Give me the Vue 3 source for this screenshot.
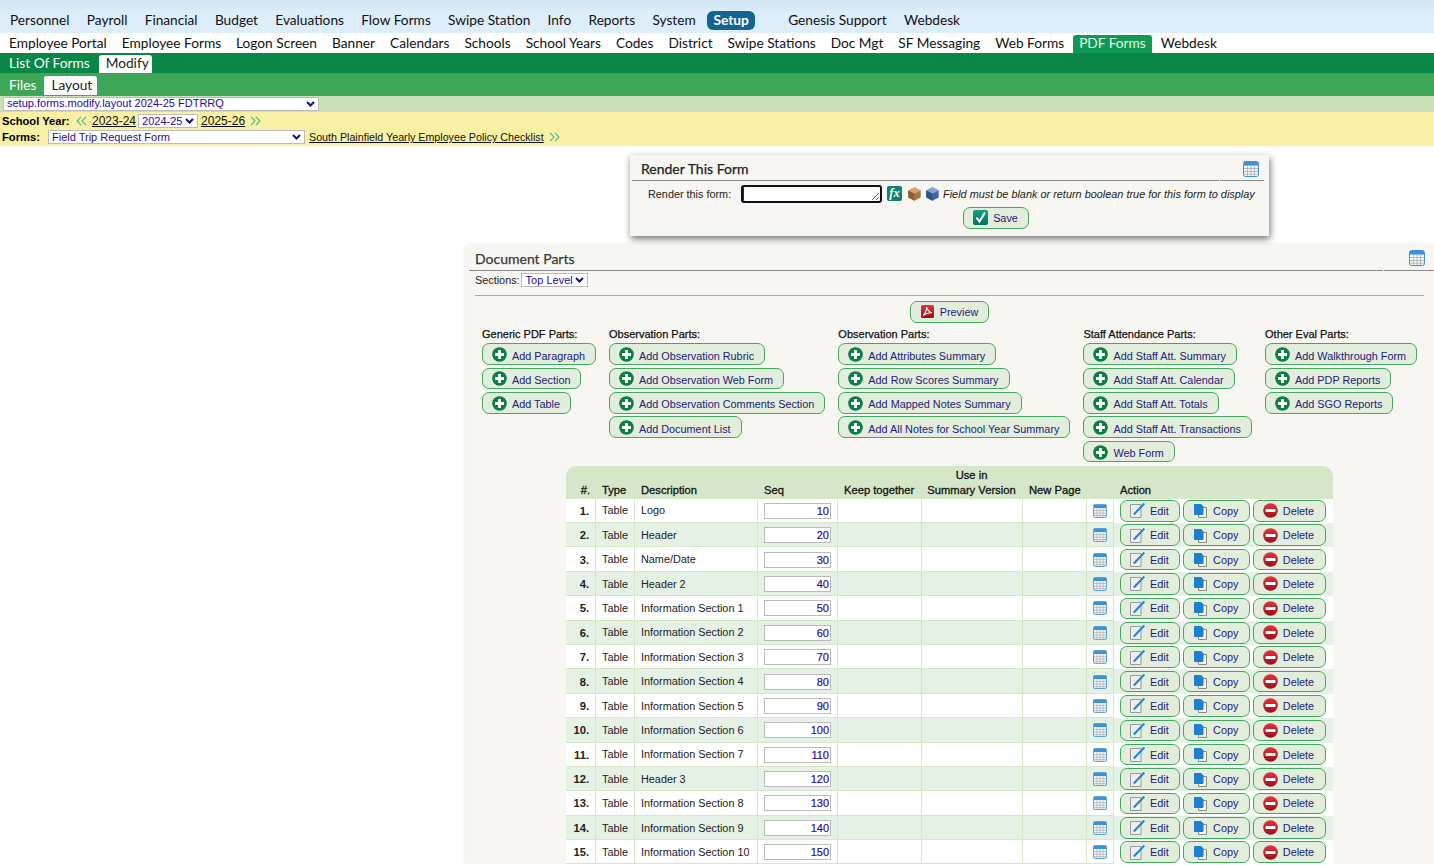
<script setup>
const nav1 = ['Personnel','Payroll','Financial','Budget','Evaluations','Flow Forms','Swipe Station','Info','Reports','System']
const nav2 = ['Employee Portal','Employee Forms','Logon Screen','Banner','Calendars','Schools','School Years','Codes','District','Swipe Stations','Doc Mgt','SF Messaging','Web Forms']
const partCols = [
  { title: 'Generic PDF Parts:', items: ['Add Paragraph','Add Section','Add Table'] },
  { title: 'Observation Parts:', items: ['Add Observation Rubric','Add Observation Web Form','Add Observation Comments Section','Add Document List'] },
  { title: 'Observation Parts:', items: ['Add Attributes Summary','Add Row Scores Summary','Add Mapped Notes Summary','Add All Notes for School Year Summary'] },
  { title: 'Staff Attendance Parts:', items: ['Add Staff Att. Summary','Add Staff Att. Calendar','Add Staff Att. Totals','Add Staff Att. Transactions','Web Form'] },
  { title: 'Other Eval Parts:', items: ['Add Walkthrough Form','Add PDP Reports','Add SGO Reports'] },
]
const names = ['Logo','Header','Name/Date','Header 2','Information Section 1','Information Section 2','Information Section 3','Information Section 4','Information Section 5','Information Section 6','Information Section 7','Header 3','Information Section 8','Information Section 9','Information Section 10']
const rows = names.map((d, i) => ({ n: i + 1, d, seq: (i + 1) * 10 }))
</script>

<template>
  <svg class="sprite" aria-hidden="true">
    <defs>
      <linearGradient id="g-red" x1="0" y1="0" x2="0" y2="1"><stop offset="0" stop-color="#e8333a"/><stop offset="1" stop-color="#98101a"/></linearGradient>
      <linearGradient id="g-teal" x1="0" y1="0" x2="0" y2="1"><stop offset="0" stop-color="#16a08c"/><stop offset="1" stop-color="#04705f"/></linearGradient>
      <symbol id="i-plus" viewBox="0 0 15 15"><circle cx="7.5" cy="7.5" r="7.3" fill="#0b7d45"/><path d="M7.5 3v9M3 7.5h9" stroke="#fff" stroke-width="2.8"/></symbol>
      <symbol id="i-cal" viewBox="0 0 16 16"><rect x=".5" y=".5" width="15" height="15" rx="2" fill="#f4f6f8" stroke="#3d92d6"/><rect x="1" y="1" width="14" height="3.6" fill="#3d92d6"/><path d="M1 7.5h14M1 10.5h14M1 13.2h14M4.5 5v10M8 5v10M11.5 5v10" stroke="#a9aeb3" stroke-width=".8"/></symbol>
      <symbol id="i-edit" viewBox="0 0 15 15"><path d="M.5 1.5h10.5v13H.5z" fill="#eee" stroke="#999"/><path d="M3.8 11.5 14.3.5" stroke="#1d84d6" stroke-width="2"/></symbol>
      <symbol id="i-copy" viewBox="0 0 15 15"><path d="M5.5 4.5h8v10h-8z" fill="#f7f7f7" stroke="#8a8a8a"/><path d="M1 2q0-1 1-1h6l2.5 2.5v7.5q0 1-1 1H2q-1 0-1-1z" fill="#1d7fd0"/></symbol>
      <symbol id="i-del" viewBox="0 0 15 15"><circle cx="7.5" cy="7.5" r="7.3" fill="url(#g-red)"/><rect x="2.6" y="6" width="9.8" height="3" fill="#fff"/></symbol>
      <symbol id="i-pdf" viewBox="0 0 13 13"><rect width="13" height="13" rx="1.5" fill="url(#g-red)"/><path d="M2 10.5C4 9 6 5 5.6 2.2c1 3 2.6 5 5.4 5.6-3-.3-6 .4-9 2.7z" fill="none" stroke="#fff" stroke-width="1.1"/></symbol>
      <symbol id="i-check" viewBox="0 0 15 15"><rect width="15" height="15" rx="2" fill="url(#g-teal)"/><path d="M3.5 7.5 6.5 11.5 12 2.5" fill="none" stroke="#fff" stroke-width="2"/></symbol>
      <symbol id="i-box" viewBox="0 0 13 14"><path d="M6.5.3 12.7 3.5v7L6.5 13.7.3 10.5v-7z" fill="#a9764a"/><path d="M6.5.3 12.7 3.5 6.5 6.7.3 3.5z" fill="#d0a479"/><path d="M6.5 6.7v7L.3 10.5v-7z" fill="#8d5f36"/></symbol>
      <symbol id="i-cube" viewBox="0 0 13 14"><path d="M6.5.3 12.7 3.5v7L6.5 13.7.3 10.5v-7z" fill="#3f67a3"/><path d="M6.5.3 12.7 3.5 6.5 6.7.3 3.5z" fill="#84a6d4"/><path d="M6.5 6.7v7L.3 10.5v-7z" fill="#31538a"/></symbol>
      <symbol id="i-left" viewBox="0 0 11 10"><path d="M5 .8 1 5l4 4.2M10 .8 6 5l4 4.2" fill="none" stroke="#3dbb9a" stroke-width="1.1"/></symbol>
      <symbol id="i-right" viewBox="0 0 11 10"><path d="M1 .8 5 5 1 9.2M6 .8 10 5 6 9.2" fill="none" stroke="#3dbb9a" stroke-width="1.1"/></symbol>
      <symbol id="i-down" viewBox="0 0 9 6"><path d="M1 1l3.5 3.5L8 1" fill="none" stroke="#1c0a80" stroke-width="2"/></symbol>
    </defs>
  </svg>

  <header>
    <nav class="nav1">
      <a v-for="t in nav1" :key="t">{{ t }}</a>
      <a class="setup">Setup</a>
      <a class="support">Genesis Support</a>
      <a>Webdesk</a>
    </nav>
    <nav class="nav2">
      <a v-for="t in nav2" :key="t">{{ t }}</a>
      <a class="pdf">PDF Forms</a>
      <a>Webdesk</a>
    </nav>
    <nav class="nav3"><a>List Of Forms</a><a class="tab">Modify</a></nav>
    <nav class="nav4"><a>Files</a><a class="tab">Layout</a></nav>
  </header>

  <div class="ctx">
    <div class="sel ctx-sel" role="combobox"><span>setup.forms.modify.layout 2024-25 FDTRRQ</span><svg class="down"><use href="#i-down"/></svg></div>
  </div>
  <div class="yellow">
    <div class="yrow">
      <b class="y-label">School Year:</b>
      <svg class="chev"><use href="#i-left"/></svg>
      <a class="ylink">2023-24</a>
      <div class="sel year-sel" role="combobox"><span>2024-25</span><svg class="down"><use href="#i-down"/></svg></div>
      <a class="ylink">2025-26</a>
      <svg class="chev"><use href="#i-right"/></svg>
    </div>
    <div class="yrow">
      <b class="f-label">Forms:</b>
      <div class="sel form-sel" role="combobox"><span>Field Trip Request Form</span><svg class="down"><use href="#i-down"/></svg></div>
      <a class="ylink">South Plainfield Yearly Employee Policy Checklist</a>
      <svg class="chev"><use href="#i-right"/></svg>
    </div>
  </div>

  <main class="main">
    <section class="render">
      <div class="phead">
        <h2>Render This Form</h2>
        <div class="calcell"><svg class="cal"><use href="#i-cal"/></svg></div>
      </div>
      <div class="render-row">
        <label>Render this form:</label>
        <textarea class="expr"></textarea>
        <span class="fx">fx</span>
        <svg class="box first"><use href="#i-box"/></svg>
        <svg class="box"><use href="#i-cube"/></svg>
        <em>Field must be blank or return boolean true for this form to display</em>
      </div>
      <div class="center save">
        <button class="btn"><svg class="ico"><use href="#i-check"/></svg>Save</button>
      </div>
    </section>

    <section class="doc">
      <div class="phead dhead">
        <h2>Document Parts</h2>
        <div class="calcell"><svg class="cal"><use href="#i-cal"/></svg></div>
      </div>
      <div class="sections">
        <span>Sections:</span>
        <div class="sel sec-sel" role="combobox"><span>Top Level</span><svg class="down"><use href="#i-down"/></svg></div>
      </div>
      <div class="center preview">
        <button class="btn"><svg class="ico pdf-ico"><use href="#i-pdf"/></svg>Preview</button>
      </div>
      <div class="parts">
        <div v-for="(c, i) in partCols" :key="i" class="pcol">
          <div class="ptitle">{{ c.title }}</div>
          <div v-for="b in c.items" :key="b" class="pitem">
            <button class="btn"><svg class="ico"><use href="#i-plus"/></svg>{{ b }}</button>
          </div>
        </div>
      </div>

      <div class="grid">
        <div class="thead">
          <span class="th num">#.</span>
          <span class="th">Type</span>
          <span class="th">Description</span>
          <span class="th">Seq</span>
          <span class="th">Keep together</span>
          <span class="th sum">Use in<br>Summary Version</span>
          <span class="th">New Page</span>
          <span class="th"></span>
          <span class="th act-h">Action</span>
        </div>
        <div v-for="r in rows" :key="r.n" class="tr">
          <span class="td num">{{ r.n }}.</span>
          <span class="td txt">Table</span>
          <span class="td txt">{{ r.d }}</span>
          <span class="td"><input class="seq" :value="r.seq"></span>
          <span class="td"></span>
          <span class="td"></span>
          <span class="td"></span>
          <span class="td icon-td"><svg class="cal"><use href="#i-cal"/></svg></span>
          <span class="td actions">
            <button class="btn"><svg class="ico"><use href="#i-edit"/></svg>Edit</button>
            <button class="btn"><svg class="ico"><use href="#i-copy"/></svg>Copy</button>
            <button class="btn"><svg class="ico"><use href="#i-del"/></svg>Delete</button>
          </span>
        </div>
      </div>
    </section>
  </main>
</template>

<style>
html, body { overflow: hidden; background: #fff; }
</style>

<style scoped>
.sprite { position: absolute; width: 0; height: 0; }
h2 { margin: 0; flex: 1; font: 400 14px/1 Lato, sans-serif; color: #222; -webkit-text-stroke: .25px currentColor; border-bottom: 1px solid #888; }
a { color: #111; white-space: nowrap; }

.nav1, .nav2, .nav3, .nav4 { display: flex; font: 13.7px/1 Lato, sans-serif; }
.nav1 { height: 33px; box-sizing: border-box; padding: 13px 0 0 10px; gap: 17.3px; background: linear-gradient(#d3e6f3, #dcedfb 40%); }
.setup { margin: -2px 0 0 -6px; height: 19px; line-height: 18px; padding: 0 6.5px; border-radius: 6px; background: #156391; color: #fff; font-weight: 700; }
.support { margin-left: 15.5px; }
.nav2 { height: 20px; box-sizing: border-box; padding: 3px 0 0 9px; gap: 15px; background: #fff; }
.pdf { margin: -1px -6px 0; height: 18px; padding: 1px 6px 0; box-sizing: border-box; border-radius: 3px 3px 0 0; background: #0e9a55; color: #e6f5ea; }
.nav3 { height: 20px; box-sizing: border-box; padding: 3px 0 0 9px; background: #0a8747; color: #fff; }
.nav3 a, .nav4 a { color: #fff; }
.nav4 { height: 22px; box-sizing: border-box; padding: 5px 0 0 9px; background: #3ea757; }
.nav3 a.tab, .nav4 a.tab { color: #222; background: #fff; border-radius: 3px 3px 0 0; padding: 2px 6px 0 7px; box-sizing: border-box; width: 53px; }
.nav3 a.tab { margin: -1px 0 0 9px; height: 18px; padding-top: 1px; }
.nav4 a.tab { margin: -2px 0 0 8px; height: 19px; }

.sel { display: flex; align-items: center; justify-content: space-between; flex: none; font: 11px/12px "Liberation Sans", sans-serif; color: #2a0a9e; background: #fff; border: 1px solid #bbb; padding: 0 3px 1px; height: 14px; box-sizing: border-box; white-space: nowrap; }
.down { width: 9px; height: 6px; flex: none; margin-top: 1px; }
.ctx { height: 17px; box-sizing: border-box; border-top: 1px solid #808080; padding: 1px 0 0 3px; background: #c9e0b9; }
.ctx-sel { width: 316px; padding-bottom: 2px; }
.yellow { height: 34px; background: #f9f0a4; font: 10.7px "Liberation Sans", sans-serif; padding-top: 1px; box-sizing: border-box; }
.yrow { height: 16px; display: flex; align-items: center; padding-left: 2px; }
.y-label { font-weight: 700; font-size: 11.2px; width: 74px; }
.f-label { font-weight: 700; font-size: 11.2px; width: 46px; }
.ylink { text-decoration: underline; color: #111; }
.yrow:first-child .ylink { font-size: 12px; }
.chev { width: 11px; height: 10px; margin: 0 5px; flex: none; }
.yrow .chev:first-of-type { margin-left: 0; }
.yrow:last-child .chev { margin-left: 5px; }
.year-sel { width: 60px; margin: 0 3px 0 2px; }
.form-sel { width: 257px; margin-right: 4px; }

.main { margin-left: 465px; display: flex; flex-direction: column; align-items: center; padding-top: 9px; font: 10.85px "Liberation Sans", sans-serif; color: #222; }
.render { width: 639px; height: 81px; box-sizing: border-box; background: #f7f6f2; box-shadow: 1px 3px 7px rgba(0,0,0,.55); padding: 0 5px 0 2px; }
.phead { height: 26px; box-sizing: border-box; display: flex; gap: 1px; }
.phead h2 { padding: 7px 0 0 9px; }
.calcell { width: 44px; box-sizing: border-box; border-bottom: 1px solid #888; padding: 6px 0 0 23px; }
.cal { display: block; width: 16px; height: 16px; flex: none; }
.render-row { display: flex; align-items: center; height: 25px; padding: 0 0 1px 16px; }
.render-row label { width: 93px; flex: none; }
.expr { width: 141px; height: 18px; box-sizing: border-box; flex: none; border: 2px solid #111; border-radius: 3px; background: #fff; padding: 0; margin: 0; outline: 0; box-shadow: inset 1px 0 #2a1a9e; }
.fx { width: 15px; height: 15px; margin-left: 5px; flex: none; border-radius: 2px; background: #0d8373; color: #fff; font: italic 700 12.5px/15px "Liberation Serif", serif; text-align: center; }
.box { width: 13px; height: 14px; flex: none; margin-left: 5px; }
.box.first { margin-left: 6px; }
.render-row em { margin-left: 4px; white-space: nowrap; font-size: 10.9px; }
.center { display: flex; justify-content: center; }
.save { padding-left: 96px; }

.btn { display: inline-flex; align-items: center; height: 21.6px; box-sizing: border-box; padding: 0 10px 0 9px; border: 1px solid #43a85f; border-radius: 7px; background: #e2eddc; color: #231a7a; font: 10.85px "Liberation Sans", sans-serif; white-space: nowrap; margin: 0; }
.ico { width: 15px; height: 15px; flex: none; margin-right: 5px; }
.pdf-ico { width: 13px; height: 13px; margin: 0 6px 0 1px; }

.doc { width: 969px; margin-top: 9px; box-sizing: border-box; background: #f7f6f2; border-radius: 6px 0 0 0; box-shadow: 0 0 4px rgba(0,0,0,.1); padding: 0 0 0 4px; }
.dhead { height: 26px; }
.dhead h2 { padding: 7px 0 0 6px; color: #3a3a3a; }
.dhead .calcell { width: 50px; padding: 5px 0 0 25px; }
.sections { display: flex; align-items: center; gap: 1px; height: 25px; margin: 0 10px 0 6px; border-bottom: 1px solid #aaa; box-sizing: border-box; }
.sec-sel { width: 67px; margin-top: -6px; padding-left: 4px; }
.sections > span { margin-top: -6px; }
.preview { margin-top: 5px; padding-right: 4px; }
.parts { display: flex; gap: 13px; padding-left: 13px; margin-top: 4px; height: 132px; }
.ptitle { height: 17px; line-height: 15px; color: #111; font-size: 11px; -webkit-text-stroke: .25px currentColor; }
.pitem { height: 24.4px; }
.pitem .btn { margin-top: -.4px; padding-top: 3px; }
.pitem .ico { margin-top: -2px; }

.grid { width: 767px; margin: 7px 0 0 97px; border-radius: 10px 10px 0 0; overflow: hidden; }
.thead, .tr { display: grid; grid-template-columns: 29px 39px 123px 80px 84px 101px 64px 27px 220px; }
.thead { height: 33px; background: #d5e7c8; }
.th { align-self: end; padding: 0 0 2px 7px; font-size: 11.2px; color: #111; -webkit-text-stroke: .3px currentColor; line-height: 14px; }
.th.num { padding: 0 5px 2px 0; text-align: right; }
.th.sum { text-align: center; padding: 0 0 1px; line-height: 15px; }
.th.act-h { padding-left: 7px; }
.tr { height: 24.4px; background: #fff; }
.tr:nth-child(odd) { background: #e6f1e6; }
.td { display: flex; align-items: center; padding-left: 6px; border-left: 1px solid #d5e7c8; box-shadow: inset 0 -1px #d5e7c8; box-sizing: border-box; min-width: 0; white-space: nowrap; }
.td.txt { padding-bottom: .6px; }
.td.num { justify-content: flex-end; padding: 0 6px 0 0; font-weight: 700; font-size: 11.2px; border-left: 0; }
.seq { width: 67px; height: 16px; box-sizing: border-box; border: 1px solid #bbb; background: #fff; color: #2a0a9e; font: 11px "Liberation Sans", sans-serif; -webkit-text-stroke: .2px currentColor; text-align: right; padding: 0 1px 0 0; margin: 0; border-radius: 0; }
.icon-td { padding-left: 6px; }
.icon-td .cal { width: 14px; height: 14px; }
.actions { gap: 3px; padding-left: 6px; box-shadow: none; }
.actions .btn { padding-right: 10.4px; }
</style>
